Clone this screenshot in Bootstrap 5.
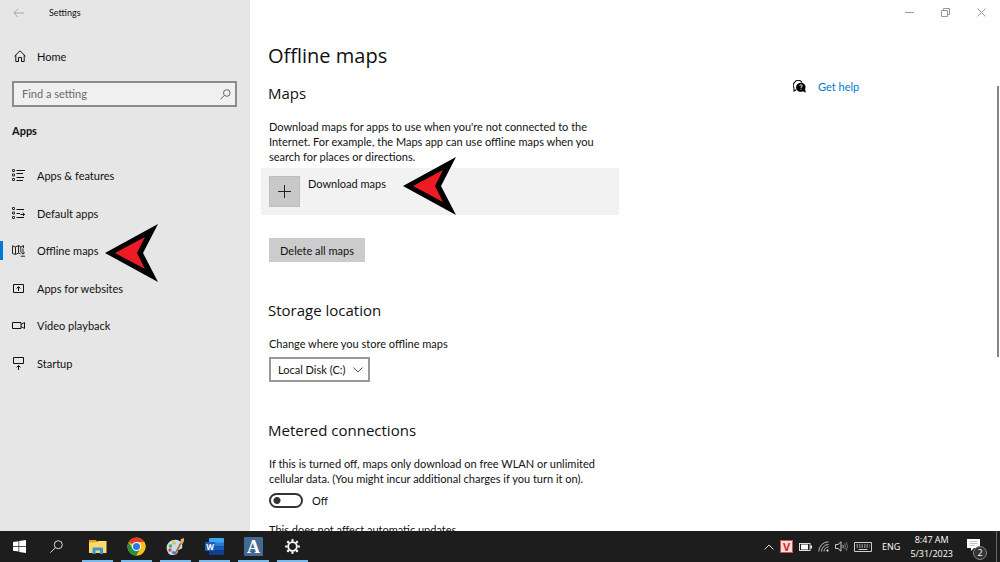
<!DOCTYPE html>
<html lang="en">
<head>
<meta charset="utf-8">
<meta name="viewport" content="width=device-width, initial-scale=1">
<title>Settings</title>
<link href="https://cdn.jsdelivr.net/npm/bootstrap@5.3.0/dist/css/bootstrap.min.css" rel="stylesheet">
<style>
  body { font-family: Lato, "Open Sans", sans-serif; font-size: 11px; line-height: 15px; color: #111; background: #fff; }
  svg { display: block; flex: none; }
  h1, h2 { font-family: "Open Sans", "Noto Sans", sans-serif; font-weight: 400; margin: 0 0 0 -1px; color: #111; }
  h1 { font-size: 20px; line-height: 26px; }
  h2 { font-size: 15px; line-height: 20px; }
  .sidebar { width: 25%; min-width: 250px; background: #e6e6e6; }
  .title-bar { height: 25px; font-size: 9px; }
  .back { margin-left: 13px; color: #a5a5a5; }
  .app-name { margin-left: 25px; }
  .home-link { margin-top: 21px; height: 20px; gap: 11px; padding-left: 14px; }
  .search { margin: 15px 13px 0 12px; height: 26px; border: 2px solid #8c8c8c; background: #f0f0f0; }
  .search input { font-size: 11px; line-height: 15px; padding: 0 8px 2px; min-height: 0; color: #111; }
  .search input::placeholder { color: #6b6b6b; opacity: 1; }
  .group-title { margin-top: 14px; padding-left: 12px; line-height: 20px; font-weight: 700; }
  .side-list { margin-top: 16px; height: 225px; }
  .side-list a { gap: 12px; padding-left: 12px; }
  .side-list .here::before { content: ""; position: absolute; left: 0; width: 3px; height: 19px; background: #0078d7; }
  .pointer { position: absolute; left: 100%; top: 50%; transform: translateY(-50%); }
  .side-pointer { margin: 2px 0 0 6px; }
  .row-pointer { margin: 2px 0 0 17px; }
  .caption { right: 1px; top: 0; height: 25px; }
  .caption button { width: 36px; color: #999; }
  .settings-page { padding: 43px 0 0 19px; width: 369px; }
  .maps-title { margin-top: 14px; }
  .download { margin: 4px 0 0 -8px; height: 47px; padding: 8px; gap: 8px; background: #f2f2f2; }
  .plus { width: 31px; height: 31px; background: #c8c8c8; border: 1px solid #bebebe; }
  .gray-btn { height: 24px; margin-top: 23px; min-width: 96px; background: #ccc; padding: 0 10px; color: #111; }
  .storage-title, .metered-title { margin-top: 38px; }
  .drive-label { margin-top: 16px; }
  .drive { width: 101px; height: 25px; margin-top: 6px; font-size: 11px; line-height: 15px; border: 2px solid #999; border-radius: 0; color: #111; padding: 0 14px 0 7px;
    background: #fff url("data:image/svg+xml,%3Csvg xmlns='http://www.w3.org/2000/svg' viewBox='0 0 10 6'%3E%3Cpath d='M.5.5 5 5 9.5.5' fill='none' stroke='%23444' stroke-width='.9'/%3E%3C/svg%3E") no-repeat right 5px center / 10px 6px; }
  .flip-row { margin-top: 7px; gap: 9px; }
  .form-check-input.flip { width: 34px; height: 15px; margin: 0; float: none; border: 2px solid #333; border-radius: 8px;
    background: #fff radial-gradient(circle at 6px 50%, #333 3px, #fff 4px); }
  .note { margin-top: 14px; }
  .help { margin: 79px auto 0 174px; height: 15px; gap: 12px; }
  .help a { color: #0078d7; }
  .scroll-thumb { width: 2px; height: 271px; margin: 86px 1px 0 0; background: #868686; }
  .taskbar { height: 31px; background: #1d1d1d; color: #fff; font-family: "Open Sans", "Noto Sans", sans-serif; font-size: 9px; line-height: 14px; }
  .taskbar .task { width: 39px; height: 31px; }
  .taskbar .open::after { content: ""; position: absolute; left: 4px; right: 4px; bottom: 0; height: 2px; background: #76b9ed; }
  .tray { gap: 6px; }
  .notice { width: 20px; height: 20px; margin: 0 9px 0 8px; }
  .count { position: absolute; right: 0; bottom: -3px; width: 14px; height: 14px; border: 1px solid #888; border-radius: 50%; background: #333; line-height: 12px; text-align: center; }
  .peek { width: 4px; border-left: 1px solid #666; }
</style>
</head>
<body class="vh-100 d-flex flex-column overflow-hidden">
<svg class="d-none">
  <symbol id="pointer" viewBox="0 0 53 58"><path d="M0 29 53 0 38 29 53 58Z"/><path d="M10 29 40 13 32 29 40 45Z" fill="#ed1c24"/></symbol>
</svg>

<div class="d-flex flex-fill overflow-hidden position-relative">
  <aside class="sidebar flex-shrink-0">
    <div class="title-bar d-flex align-items-center">
      <button class="btn p-0 border-0 back" aria-label="Back"><svg width="11" height="10" viewBox="0 0 11 10" fill="none" stroke="currentColor"><path d="M11 5H1M5 .8.8 5 5 9.200"/></svg></button>
      <span class="app-name">Settings</span>
    </div>
    <a href="#" class="home-link d-flex align-items-center text-reset text-decoration-none">
      <svg width="12" height="12" viewBox="0 0 12 12" fill="none" stroke="#111"><path d="M.5 6.200 6 .8l5.500 5.400M1.800 5v6.500h2.700V7.500h3v4h2.700V5"/></svg>
      <span>Home</span>
    </a>
    <div class="search d-flex align-items-center pe-1">
      <input type="text" class="form-control border-0 bg-transparent shadow-none" placeholder="Find a setting" aria-label="Find a setting">
      <svg width="11" height="11" viewBox="0 0 11 11" fill="none" stroke="#666"><circle cx="6.800" cy="4" r="3.300"/><path d="M4.400 6.400.5 10.300"/></svg>
    </div>
    <div class="group-title">Apps</div>
    <nav class="side-list d-flex flex-column">
      <a href="#" class="flex-fill d-flex align-items-center text-reset text-decoration-none">
        <svg width="13" height="13" viewBox="0 0 13 13" fill="none" stroke="#111"><path d="M4.500 1.500H13M4.500 4.500h6.500M4.500 8.500H12M4.500 11.500H11"/><path d="M.5.5h2v2h-2zM.5 5h2v2h-2zM.5 9.500h2v2h-2z" stroke="#333"/></svg>
        <span>Apps &amp; features</span></a>
      <a href="#" class="flex-fill d-flex align-items-center text-reset text-decoration-none">
        <svg width="13" height="13" viewBox="0 0 13 13" fill="none" stroke="#111"><path d="M4.500 2.500H12M4.500 6.500h3.500M4.500 10.500H12M8.500 7.500h4M10.800 5.500l1.700 2-1.700 1.500"/><path d="M.5.5h2v2h-2zM.5 5h2v2h-2zM.5 9.500h2v2h-2z" stroke="#333"/></svg>
        <span>Default apps</span></a>
      <a href="#" aria-current="page" class="here flex-fill d-flex align-items-center text-reset text-decoration-none position-relative">
        <svg width="13" height="13" viewBox="0 0 13 13" fill="none" stroke="#222"><path d="M8.500 10 6.500 9 3.500 10.500.5 9.500V1.800L3.500 3 6.500 1.500 9 3l2.500-1.500V4M3.500 3v7M6.500 1.500V9M8.800 3v5"/><path d="M11 4.500v5.500M9 8.200l2 2 2-2M8.800 12.200H13"/></svg>
        <span class="position-relative">Offline maps<svg class="pointer side-pointer" width="53" height="58" aria-hidden="true"><use href="#pointer"/></svg></span></a>
      <a href="#" class="flex-fill d-flex align-items-center text-reset text-decoration-none">
        <svg width="13" height="13" viewBox="0 0 13 13" fill="none" stroke="#111"><path d="M1.500 2.500h10v8h-10z"/><path d="M6.500 9V4.800M4.600 6.500l1.900-1.900 1.900 1.900"/></svg>
        <span>Apps for websites</span></a>
      <a href="#" class="flex-fill d-flex align-items-center text-reset text-decoration-none">
        <svg width="13" height="13" viewBox="0 0 13 13" fill="none" stroke="#111"><path d="M.5 3.500h8.500v6H.5zM9 5.500l3.500-2v6l-3.500-2"/></svg>
        <span>Video playback</span></a>
      <a href="#" class="flex-fill d-flex align-items-center text-reset text-decoration-none">
        <svg width="13" height="13" viewBox="0 0 13 13" fill="none" stroke="#111"><path d="M1.500.5h10v6h-10z"/><path d="M6.500 13V8.500M4.600 10.400l1.900-1.900 1.900 1.900"/></svg>
        <span>Startup</span></a>
    </nav>
  </aside>

  <main class="d-flex flex-fill align-items-start">
    <section class="settings-page flex-shrink-0">
      <h1>Offline maps</h1>
      <h2 class="maps-title">Maps</h2>
      <p class="mb-0 mt-3 text-nowrap">Download maps for apps to use when you're not connected to the<br>Internet. For example, the Maps app can use offline maps when you<br>search for places or directions.</p>
      <div class="download d-flex align-items-start">
        <button id="add" class="btn rounded-0 p-0 plus d-flex align-items-center justify-content-center" aria-label="Download maps"><svg width="13" height="13" stroke="#222"><path d="M6.500 0v13M0 6.500h13"/></svg></button>
        <label for="add" class="position-relative">Download maps<svg class="pointer row-pointer" width="53" height="58" aria-hidden="true"><use href="#pointer"/></svg></label>
      </div>
      <button class="gray-btn border-0 d-block">Delete all maps</button>

      <h2 class="storage-title">Storage location</h2>
      <label for="drive" class="drive-label d-block">Change where you store offline maps</label>
      <select id="drive" class="form-select drive"><option>Local Disk (C:)</option></select>

      <h2 class="metered-title">Metered connections</h2>
      <p class="mb-0 mt-3 text-nowrap">If this is turned off, maps only download on free WLAN or unlimited<br>cellular data. (You might incur additional charges if you turn it on).</p>
      <div class="flip-row form-switch p-0 d-flex align-items-center">
        <input class="form-check-input flip" type="checkbox" role="switch" id="metered"><label for="metered">Off</label>
      </div>
      <p class="note mb-0">This does not affect automatic updates.</p>
    </section>
    <div class="help d-flex align-items-center">
      <svg width="13" height="13" viewBox="0 0 13 13"><path d="M3.500 9.500 1 11V8A4.500 4.500 0 0 1 1.500 2.500 4.300 4.300 0 0 1 9 2.500" fill="none" stroke="#111" stroke-width="1.100"/><path d="M8 2.800a4.300 4.300 0 0 1 4.100 6.200L12.800 12.800 9.800 11.200A4.500 4.500 0 1 1 8 2.800Z"/><path d="M6.700 6Q6.800 4.800 8 4.800T9.300 6Q9.200 6.800 8 7.200V8M8 8.800v1" fill="none" stroke="#fff" stroke-width=".9"/></svg>
      <a href="#" class="text-decoration-none">Get help</a>
    </div>
    <div class="scroll-thumb"></div>
  </main>

  <div class="caption d-flex position-absolute">
    <button class="btn p-0 border-0 d-flex align-items-center justify-content-center" aria-label="Minimize"><svg width="9" height="9" stroke="currentColor"><path d="M0 4.500h9"/></svg></button>
    <button class="btn p-0 border-0 d-flex align-items-center justify-content-center" aria-label="Restore"><svg width="9" height="9" stroke="currentColor" fill="none"><path d="M.5 2.500h6v6h-6zM2.500 2.500v-2h6v6h-2"/></svg></button>
    <button class="btn p-0 border-0 d-flex align-items-center justify-content-center" aria-label="Close"><svg width="9" height="9" stroke="currentColor"><path d="M.5.5l8 8M8.500.5l-8 8"/></svg></button>
  </div>
</div>

<footer class="taskbar d-flex flex-shrink-0 align-items-stretch">
  <button class="btn p-0 border-0 rounded-0 task d-flex align-items-center justify-content-center" aria-label="Start"><svg width="13" height="13" fill="#fff"><path d="M0 2 5.500 1.200V6H0zM6.200 1.100 13 0v6H6.200zM0 6.700h5.500v4.900L0 10.800zM6.200 6.700H13V13l-6.800-1.100z"/></svg></button>
  <button class="btn p-0 border-0 rounded-0 task d-flex align-items-center justify-content-center pe-1" aria-label="Search"><svg width="13" height="13" fill="none" stroke="#ddd"><circle cx="8.300" cy="4.700" r="4"/><path d="M5.400 7.600.4 12.600"/></svg></button>
  <button class="btn p-0 border-0 rounded-0 task open position-relative d-flex align-items-center justify-content-center" aria-label="File Explorer"><svg width="18" height="16" viewBox="0 0 18 16"><path d="M0 1h7l1.500 2H17v11H0z" fill="#e8a317"/><path d="M0 3.500 8 3l1-1h8.500v12H0z" fill="#ffd866"/><path d="M3.500 15V9.500q0-1 1-1h8.500q1 0 1 1V15h-3v-3.500H6.500V15z" fill="#3694dd"/></svg></button>
  <button class="btn p-0 border-0 rounded-0 task open position-relative d-flex align-items-center justify-content-center" aria-label="Chrome"><svg width="19" height="19" viewBox="0 0 20 20"><circle cx="10" cy="10" r="9.500" fill="#fbc116"/><path d="M10 10 1.770 5.250A9.500 9.500 0 0 1 18.230 5.250H10Z" fill="#e33b2e"/><path d="M1.770 5.250A9.500 9.500 0 0 0 10 19.500L14.100 12.400 10 10 5.900 12.400Z" fill="#229342"/><path d="M18.230 5.250H10l4.100 7.100L10 19.500A9.500 9.500 0 0 0 18.230 5.250Z" fill="#fbc116"/><circle cx="10" cy="10" r="4.800" fill="#fff"/><circle cx="10" cy="10" r="3.700" fill="#2979e8"/></svg></button>
  <button class="btn p-0 border-0 rounded-0 task open position-relative d-flex align-items-center justify-content-center" aria-label="Paint"><svg width="19" height="18" viewBox="0 0 19 18"><path d="M1 12C-1 6 5 1 11 2c5 1 6 5 5 8-1 2-4 1-4 3 0 3-3 4-6 4q-4 0-5-5Z" fill="#c3dff0"/><circle cx="4.500" cy="8" r="1.700" fill="#55ad45"/><circle cx="8" cy="5" r="1.700" fill="#f1b51d"/><circle cx="4" cy="12" r="1.700" fill="#e34a36"/><circle cx="7.500" cy="14.500" r="1.500" fill="#3c76c9"/><path d="M9 16 15.500 4" stroke="#b46b2b" stroke-width="1.600"/><path d="M14 5 15 1 18 0 18 3 16.500 6Z" fill="#e8ad65"/></svg></button>
  <button class="btn p-0 border-0 rounded-0 task open position-relative d-flex align-items-center justify-content-center" aria-label="Word"><svg width="19" height="17" viewBox="0 0 19 17"><path d="M5 0h13q1 0 1 1v4H4V1q0-1 1-1Z" fill="#41a5ee"/><path d="M4 4.500h15v4H4z" fill="#2b7cd3"/><path d="M4 8.500h15v4H4z" fill="#185abd"/><path d="M4 12.500h15V16q0 1-1 1H5q-1 0-1-1z" fill="#103f91"/><rect y="4" width="10" height="9" rx="1" fill="#1b5cbe"/><text x="5" y="11.500" text-anchor="middle" font-family="Open Sans, sans-serif" font-weight="700" font-size="8" fill="#fff">W</text></svg></button>
  <button class="btn p-0 border-0 rounded-0 task open position-relative d-flex align-items-center justify-content-center" aria-label="Dictionary"><svg width="19" height="19"><rect width="19" height="19" rx="1" fill="#456a92"/><text x="9.500" y="15.500" text-anchor="middle" font-family="Liberation Serif, serif" font-weight="700" font-size="18" fill="#fff">A</text></svg></button>
  <button class="btn p-0 border-0 rounded-0 task open position-relative d-flex align-items-center justify-content-center" aria-label="Settings"><svg width="15" height="15" viewBox="-7.500 -7.500 15 15" fill="none" stroke="#fff"><circle r="4.300" stroke-width="1.800"/><path stroke-width="2.200" d="M0-7.300V-5M0 7.300V5M-7.300 0H-5M7.300 0H5M-5.200-5.200-3.600-3.600M5.200 5.200 3.600 3.600M-5.200 5.200-3.600 3.600M5.200-5.200 3.600-3.600"/></svg></button>

  <div class="tray d-flex align-items-center ms-auto">
    <svg width="10" height="6" fill="none" stroke="#ddd"><path d="M.5 5.500 5 1l4.500 4.500"/></svg>
    <svg width="13" height="13"><rect x=".5" y=".5" width="12" height="12" fill="#f7dcdc" stroke="#c9534f"/><text x="6.500" y="10.500" text-anchor="middle" font-family="Open Sans, sans-serif" font-weight="700" font-size="11" fill="#cf2a27">V</text></svg>
    <svg width="13" height="8"><rect x=".5" y=".5" width="10.500" height="7" fill="none" stroke="#ddd"/><path d="M2 1.500h7v5H2zM11.500 2.500H13v3h-1.500z" fill="#fff"/></svg>
    <svg width="11" height="11" fill="none" stroke="#bbb"><path d="M.8 10.500A9.700 9.700 0 0 1 10.500.8M3.500 10.500a7 7 0 0 1 7-7M6 10.500A4.500 4.500 0 0 1 10.500 6"/><circle cx="9.500" cy="9.500" r=".8" fill="#fff"/></svg>
    <svg width="13" height="11" fill="none" stroke="#ccc"><path d="M.5 3.500H3L6 .8v9.400L3 7.500H.5z"/><path d="M7.800 4q1 1.500 0 3"/><path d="M9.500 2.500q2 3 0 6M11.300 1.200q2.400 4.300 0 8.600" stroke="#777"/></svg>
    <svg width="18" height="10" fill="none" stroke="#ccc"><path d="M.5.500h17v9H.5z"/><path d="M2.500 3h13M2.500 5h13" stroke-dasharray="1.500 1"/><path d="M4.500 7.500h9"/></svg>
    <span class="mx-1">ENG</span>
    <div class="text-center"><div>8:47 AM</div><div>5/31/2023</div></div>
    <div class="notice position-relative"><svg width="13" height="14" fill="#fff"><path d="M0 2h13v9H7L4 14v-3H0z"/><path d="M2.500 4.500h8M2.500 6.500h8M2.500 8.500h5" stroke="#999" stroke-width=".6"/></svg><span class="count">2</span></div>
  </div>
  <div class="peek"></div>
</footer>
<script src="https://cdn.jsdelivr.net/npm/bootstrap@5.3.0/dist/js/bootstrap.bundle.min.js"></script>
</body>
</html>
